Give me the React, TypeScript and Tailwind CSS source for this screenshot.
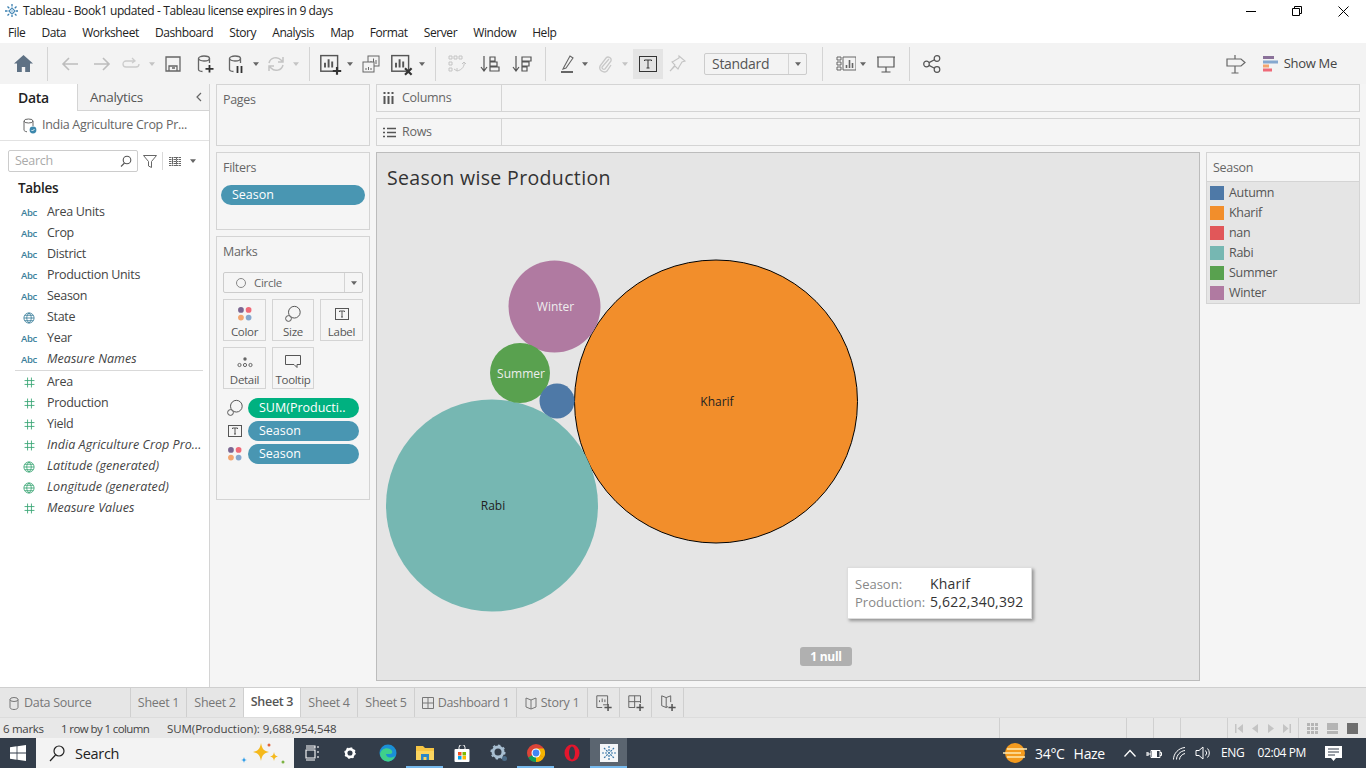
import type { ReactNode } from "react";

const ink = "#666666";

// small stroke icon wrapper, 20x20 box unless told otherwise
function Ico({ size = 20, color = ink, sw = 1.3, children }: { size?: number; color?: string; sw?: number; children: ReactNode }) {
  return (
    <svg width={size} height={size} viewBox="0 0 20 20" fill="none" stroke={color} strokeWidth={sw} className="shrink-0">
      {children}
    </svg>
  );
}

function Caret({ color = "#777777" }: { color?: string }) {
  return (
    <svg width="6" height="4" viewBox="0 0 8 5" className="shrink-0">
      <path d="M0 0h8L4 5z" fill={color} />
    </svg>
  );
}

function Cell({ w, children }: { w: string; children?: ReactNode }) {
  return <div className={`${w} h-full flex items-center justify-center shrink-0`}>{children}</div>;
}

function Sep() {
  return <div className="w-px h-[34px] bg-[#d4d4d4] shrink-0" />;
}

function Snowflake({ size = 16 }: { size?: number }) {
  return (
    <svg width={size} height={size} viewBox="0 0 16 16" fill="none" stroke="#3a7fb0" strokeWidth="1.3" className="shrink-0">
      <path d="M8 1v14M1 8h14M3.500 3.500l9 9M12.500 3.500l-9 9" strokeDasharray="2.500 1" />
      <path d="M8 5l3 3-3 3-3-3z" fill="#bcd6e8" strokeWidth="0.8" />
    </svg>
  );
}

function FourDots({ size = 20 }: { size?: number }) {
  return (
    <svg width={size} height={size} viewBox="0 0 20 20" className="shrink-0">
      <circle cx="5.500" cy="5.500" r="3.200" fill="#7b6591" />
      <circle cx="14" cy="5.500" r="3.200" fill="#ef6a78" />
      <circle cx="5.500" cy="14" r="3.200" fill="#f3a56f" />
      <circle cx="14" cy="14" r="3.200" fill="#86a8cf" />
    </svg>
  );
}

function SizeIcon() {
  return (
    <Ico size={18} color="#555555" sw={1.1}>
      <circle cx="11.500" cy="8" r="6.500" fill="#f5f5f5" />
      <circle cx="5" cy="15" r="3.200" fill="#f5f5f5" />
    </Ico>
  );
}

function TBox({ size = 14 }: { size?: number }) {
  return (
    <svg width={size} height={size} viewBox="0 0 14 14" fill="none" stroke="#555555" className="shrink-0">
      <rect x="0.500" y="1.500" width="13" height="11" />
      <path d="M4.500 5V4h5v1M7 4v6M6 10h2" />
    </svg>
  );
}

function BarChartPlus({ badge }: { badge: "plus" | "x" }) {
  return (
    <Ico size={24} color="#555555" sw={1.2}>
      <rect x="1.500" y="3" width="14" height="13" />
      <path d="M5 13V9M8 13V6M11 13V8" strokeWidth="1.600" />
      {badge === "plus" ? (
        <path d="M15 12.500v6.500M11.500 15.800h7" stroke="#333333" strokeWidth="1.800" />
      ) : (
        <path d="M12.500 13.500l5.500 5.500M18 13.500l-5.500 5.500" stroke="#333333" strokeWidth="1.800" />
      )}
    </Ico>
  );
}

function Toolbar() {
  return (
    <div className="h-[41px] bg-[#f3f3f3] flex items-center shrink-0">
      <Cell w="w-[47px]">
        <svg width="19" height="17" viewBox="0 0 19 17" fill="#5e7184">
          <path d="M9.500 0L0 8.500h3V17h4.800v-5h3.400v5H16V8.500h3z" />
        </svg>
      </Cell>
      <Sep />
      <Cell w="w-[44px]">
        <Ico color="#bdbdbd" sw={1.600}><path d="M18 10H3M9 4l-6 6 6 6" /></Ico>
      </Cell>
      <Cell w="w-[20px]">
        <Ico color="#bdbdbd" sw={1.600}><path d="M2 10h15M11 4l6 6-6 6" /></Ico>
      </Cell>
      <Cell w="w-[38px]">
        <Ico color="#cccccc"><path d="M13 7H5a3 3 0 000 6h10a3 3 0 003-3M11 4l3 3-3 2" /></Ico>
      </Cell>
      <Cell w="w-[4px]"><Caret color="#c4c4c4" /></Cell>
      <Cell w="w-[38px]">
        <Ico color="#666666"><path d="M3 3h14v14H3zM6 17v-5h8v5M9 14h3" /></Ico>
      </Cell>
      <Cell w="w-[26px]">
        <Ico color="#666666">
          <ellipse cx="9" cy="4.500" rx="5.500" ry="2.500" />
          <path d="M3.500 4.500v11c0 1 1.500 1.800 4 2M14.500 4.500V9" />
          <path d="M14.500 11v7.500M10.500 14.800h8" stroke="#333333" strokeWidth="1.800" />
        </Ico>
      </Cell>
      <Cell w="w-[36px]">
        <Ico color="#666666">
          <ellipse cx="9" cy="4.500" rx="5.500" ry="2.500" />
          <path d="M3.500 4.500v11c0 1 1.500 1.800 4 2M14.500 4.500V9" />
          <path d="M11.500 12v7M15.500 12v7" stroke="#333333" strokeWidth="1.800" />
        </Ico>
      </Cell>
      <Cell w="w-[4px]"><Caret color="#666666" /></Cell>
      <Cell w="w-[36px]">
        <Ico color="#c4c4c4" sw={1.500}><path d="M3 9a7 7 0 0112-3l2 2M17 11a7 7 0 01-12 3l-2-2M17 3v5h-5M3 17v-5h5" /></Ico>
      </Cell>
      <Cell w="w-[4px]"><Caret color="#c4c4c4" /></Cell>
      <div className="w-[11px] shrink-0" />
      <Sep />
      <Cell w="w-[42px]"><BarChartPlus badge="plus" /></Cell>
      <Cell w="w-[0px] -translate-x-[2px]"><Caret color="#666666" /></Cell>
      <Cell w="w-[38px]">
        <Ico color="#666666" sw={1}>
          <rect x="7" y="2" width="11" height="10" fill="#f3f3f3" />
          <path d="M10 10V7M12.500 10V4.500M15 10V6" />
          <rect x="2" y="8" width="11" height="10" fill="#f3f3f3" />
          <path d="M5 16v-2M7.500 16v-3M10 16v-2" />
        </Ico>
      </Cell>
      <Cell w="w-[24px]"><BarChartPlus badge="x" /></Cell>
      <Cell w="w-[16px]"><Caret color="#666666" /></Cell>
      <div className="w-[5px] shrink-0" />
      <Sep />
      <Cell w="w-[42px]">
        <Ico color="#c4c4c4" sw={1}>
          <path d="M2 2h3v3H2zM7 2h3v3H7zM12 2h3v3h-3zM2 8h3v3H2zM2 14h3v3H2z" />
          <path d="M17 8c1 4-2 8-7 9M7 15l3 2 0-3M15 10l2-2 2 2" />
        </Ico>
      </Cell>
      <Cell w="w-[24px]">
        <Ico color="#555555" sw={1.200}>
          <path d="M4 2v14M1 13l3 4 3-4" />
          <path d="M10 3h5v4h-5zM10 8h7v4h-7zM10 13h9v4h-9z" />
        </Ico>
      </Cell>
      <Cell w="w-[40px]">
        <Ico color="#555555" sw={1.200}>
          <path d="M4 2v14M1 13l3 4 3-4" />
          <path d="M10 3h9v4h-9zM10 8h7v4h-7zM10 13h5v4h-5z" />
        </Ico>
      </Cell>
      <div className="w-[3px] shrink-0" />
      <Sep />
      <Cell w="w-[44px]">
        <Ico color="#666666" sw={1.100}>
          <path d="M6 13L12 2l3 2-7 10-3 1z" />
          <path d="M3 18h12" strokeWidth="2" />
        </Ico>
      </Cell>
      <Cell w="w-[0px] -translate-x-[5px]"><Caret color="#666666" /></Cell>
      <Cell w="w-[30px]">
        <Ico color="#c8c8c8" sw={1.300}><path d="M14 5l-7 8a2 2 0 003 2l6-8a3 3 0 00-5-3l-6 8a4.500 4.500 0 007 5l4-6" /></Ico>
      </Cell>
      <Cell w="w-[10px]"><Caret color="#c4c4c4" /></Cell>
      <div className="w-[3px] shrink-0" />
      <div className="w-[30px] h-[30px] bg-[#e4e4e4] flex items-center justify-center shrink-0">
        <svg width="18" height="16" viewBox="0 0 18 16" fill="none" stroke="#333333">
          <rect x="0.500" y="0.500" width="17" height="15" />
          <path d="M5.500 5V4h7v1M9 4v8M7.500 12h3" />
        </svg>
      </div>
      <Cell w="w-[28px]">
        <Ico color="#c4c4c4" sw={1.100}><path d="M12 2l6 5-3 1-3 5-1 2-3-3-5 5 5-6-3-3 2-1 5-3z" /></Ico>
      </Cell>
      <div className="w-[13px] shrink-0" />
      <div className="w-[103px] h-[22px] border border-[#cccccc] rounded-[2px] flex items-center shrink-0">
        <span className="flex-1 pl-[7px] text-[14px] text-[#555555]">Standard</span>
        <div className="w-[18px] h-full border-l border-[#d4d4d4] flex items-center justify-center"><Caret color="#666666" /></div>
      </div>
      <div className="w-[15px] shrink-0" />
      <Sep />
      <Cell w="w-[46px]">
        <Ico color="#666666" sw={1}>
          <path d="M1 3h4v3H1zM1 8h4v3H1zM1 13h4v3H1zM7 3h13v13H7z" />
          <path d="M10.500 14v-3M13.500 14V6M16.500 14V9" strokeWidth="1.600" />
        </Ico>
      </Cell>
      <Cell w="w-[0px] -translate-x-[6px]"><Caret color="#666666" /></Cell>
      <Cell w="w-[33px]">
        <Ico color="#555555" sw={1.200}><path d="M2 3h16v10H2zM1 3h18M10 13v5M5.500 18h9" /></Ico>
      </Cell>
      <div className="w-[7px] shrink-0" />
      <Sep />
      <Cell w="w-[44px]">
        <Ico color="#555555" sw={1.200}>
          <circle cx="15" cy="4.500" r="2.800" />
          <circle cx="4.500" cy="10" r="2.800" />
          <circle cx="15" cy="15.500" r="2.800" />
          <path d="M7 8.600l5.500-2.800M7 11.400l5.500 2.800" />
        </Ico>
      </Cell>
      <div className="flex-1" />
      <Cell w="w-[24px]">
        <Ico color="#666666" sw={1.200}><path d="M1 5h14l4 3.500-4 3.500H1zM9 12v7M5.500 19h7M9 1v4" /></Ico>
      </Cell>
      <div className="w-[15px] shrink-0" />
      <svg width="15" height="16" viewBox="0 0 15 16" className="shrink-0">
        <rect x="0" y="0" width="11" height="3" fill="#8a7199" />
        <rect x="0" y="4.500" width="15" height="3" fill="#86a8cf" />
        <rect x="0" y="8.500" width="6" height="3" fill="#f3a56f" />
        <rect x="0" y="12.500" width="9" height="3" fill="#ef6a78" />
      </svg>
      <span className="ml-[6px] mr-[29px] text-[13px] text-[#444444]">Show Me</span>
    </div>
  );
}

function Abc() {
  return <span className="text-[9.500px] font-semibold text-[#3c7f9b] leading-none">Abc</span>;
}

function Globe({ color = "#3c7f9b" }: { color?: string }) {
  return (
    <div className="pl-[2px]">
      <Ico size={12} color={color} sw={1.400}>
        <circle cx="10" cy="10" r="8.500" />
        <path d="M1.500 10h17M3 5.500h14M3 14.500h14M10 1.500c-5 5-5 12 0 17M10 1.500c5 5 5 12 0 17" />
      </Ico>
    </div>
  );
}

function Hash() {
  return (
    <div className="pl-[3px]">
      <Ico size={11} color="#3aa675" sw={1.600}>
        <path d="M6.500 1v18M13.500 1v18M1 6.500h18M1 13.500h18" />
      </Ico>
    </div>
  );
}

function FieldRow({ icon, name, italic }: { icon: ReactNode; name: string; italic?: boolean }) {
  return (
    <div className="h-[21px] flex items-center">
      <div className="w-[47px] pl-[21px] flex justify-start shrink-0">{icon}</div>
      <span className={`text-[12.500px] text-[#444444] whitespace-nowrap ${italic ? "italic tracking-[0.05px]" : ""}`}>{name}</span>
    </div>
  );
}

function DataPane() {
  return (
    <div className="w-[210px] h-full bg-white border-r border-[#d4d4d4] flex flex-col shrink-0">
      <div className="h-[27px] flex shrink-0">
        <div className="w-[77px] flex items-center pl-[18px] text-[14px] font-semibold text-[#222222]">Data</div>
        <div className="flex-1 bg-[#f3f3f3] border-l border-b border-[#d4d4d4] flex items-center justify-between pl-[12px] pr-[6px]">
          <span className="text-[13.500px] text-[#555555]">Analytics</span>
          <svg width="8" height="10" viewBox="0 0 8 10" fill="none" stroke="#666666" strokeWidth="1.200"><path d="M6 1L2 5l4 4" /></svg>
        </div>
      </div>
      <div className="h-[30px] flex items-center pl-[22px] border-b border-[#e2e2e2] shrink-0">
        <svg width="15" height="16" viewBox="0 0 15 16" fill="none" stroke="#666666">
          <ellipse cx="6.500" cy="3" rx="4.500" ry="2" />
          <path d="M2 3v9c0 .8 1 1.500 3 1.800M11 3v5" />
          <circle cx="11" cy="12" r="3.400" fill="#3c88ad" stroke="none" />
          <path d="M9.500 12l1 1 2-2" stroke="#ffffff" strokeWidth="0.900" />
        </svg>
        <span className="ml-[5px] text-[12.500px] text-[#666666] whitespace-nowrap">India Agriculture Crop Pr...</span>
      </div>
      <div className="mt-[9px] h-[22px] flex items-center pl-[8px] shrink-0">
        <div className="w-[130px] h-[22px] border border-[#cccccc] rounded-[2px] flex items-center justify-between pl-[6px] pr-[5px]">
          <span className="text-[12.500px] text-[#aaaaaa]">Search</span>
          <svg width="12" height="12" viewBox="0 0 12 12" fill="none" stroke="#555555" strokeWidth="1.100"><circle cx="7" cy="5" r="3.800" /><path d="M4.500 8L1 11.500" /></svg>
        </div>
        <svg width="14" height="13" viewBox="0 0 14 13" fill="none" stroke="#666666" className="ml-[5px]"><path d="M.5.5h13L8.500 6.500V12.500L5.500 11V6.500z" /></svg>
        <div className="ml-[5px] w-px h-[18px] bg-[#d9d9d9]" />
        <svg width="12" height="9" viewBox="0 0 12 9" className="ml-[6px]" stroke="#666666" fill="none"><path d="M0 .5h12M0 2.500h12M0 4.500h12M0 6.500h12M0 8.500h12M3.500 0v9M7.500 0v9" strokeDasharray="2 .5" /></svg>
        <div className="ml-[9px]"><Caret color="#666666" /></div>
      </div>
      <div className="mt-[8px] pl-[18px] h-[17px] flex items-center text-[13.500px] font-semibold text-[#222222]">Tables</div>
      <div className="mt-[5px]">
        <FieldRow icon={<Abc />} name="Area Units" />
        <FieldRow icon={<Abc />} name="Crop" />
        <FieldRow icon={<Abc />} name="District" />
        <FieldRow icon={<Abc />} name="Production Units" />
        <FieldRow icon={<Abc />} name="Season" />
        <FieldRow icon={<Globe />} name="State" />
        <FieldRow icon={<Abc />} name="Year" />
        <FieldRow icon={<Abc />} name="Measure Names" italic />
      </div>
      <div className="ml-[15px] mr-[6px] mb-[1px] h-px bg-[#d9d9d9]" />
      <div>
        <FieldRow icon={<Hash />} name="Area" />
        <FieldRow icon={<Hash />} name="Production" />
        <FieldRow icon={<Hash />} name="Yield" />
        <FieldRow icon={<Hash />} name="India Agriculture Crop Pro..." italic />
        <FieldRow icon={<Globe color="#3aa675" />} name="Latitude (generated)" italic />
        <FieldRow icon={<Globe color="#3aa675" />} name="Longitude (generated)" italic />
        <FieldRow icon={<Hash />} name="Measure Values" italic />
      </div>
    </div>
  );
}

function MarkBtn({ icon, label }: { icon: ReactNode; label: string }) {
  return (
    <div className="h-[42px] border border-[#d4d4d4] flex flex-col items-center justify-start pt-[4px] bg-[#f5f5f5]">
      <div className="h-[20px] flex items-center justify-center">{icon}</div>
      <span className="text-[11.500px] text-[#555555] leading-[16px]">{label}</span>
    </div>
  );
}

function Pill({ color, text }: { color: string; text: string }) {
  return (
    <div className={`h-[20px] rounded-full ${color} text-white text-[12.500px] tracking-normal flex items-center pl-[11px] leading-none whitespace-nowrap`}>{text}</div>
  );
}

function CardsColumn() {
  return (
    <div className="w-[154px] ml-[6px] flex flex-col gap-[6px] shrink-0 h-full">
      <div className="h-[62px] border border-[#d4d4d4] pl-[6px] pt-[6px] text-[12.500px] text-[#666666]">Pages</div>
      <div className="h-[78px] border border-[#d4d4d4] px-[4px] pt-[7px]">
        <div className="pl-[2px] text-[12.500px] text-[#666666] leading-[16px]">Filters</div>
        <div className="mt-[9px]"><Pill color="bg-[#4996b2]" text="Season" /></div>
      </div>
      <div className="h-[264px] border border-[#d4d4d4] px-[6px] pt-[7px]">
        <div className="text-[12.500px] text-[#666666] leading-[16px]">Marks</div>
        <div className="mt-[12px] h-[21px] border border-[#cccccc] rounded-[2px] flex items-center bg-[#f5f5f5]">
          <div className="flex-1 flex items-center pl-[12px]">
            <span className="w-[10px] h-[10px] rounded-full border border-[#888888]" />
            <span className="ml-[8px] text-[11.500px] text-[#666666]">Circle</span>
          </div>
          <div className="w-[18px] h-full border-l border-[#d4d4d4] flex items-center justify-center"><Caret color="#666666" /></div>
        </div>
        <div className="mt-[6px] grid grid-cols-[43px_42px_43px] gap-x-[6px] gap-y-[6px]">
          <MarkBtn icon={<FourDots size={18} />} label="Color" />
          <MarkBtn icon={<SizeIcon />} label="Size" />
          <MarkBtn icon={<TBox />} label="Label" />
          <MarkBtn
            icon={
              <svg width="16" height="12" viewBox="0 0 16 12" fill="none" stroke="#666666">
                <circle cx="8" cy="3" r="1.700" fill="#666666" stroke="none" />
                <circle cx="2.500" cy="9" r="1.600" />
                <circle cx="8" cy="9" r="1.600" />
                <circle cx="13.500" cy="9" r="1.600" />
              </svg>
            }
            label="Detail"
          />
          <MarkBtn
            icon={
              <svg width="16" height="14" viewBox="0 0 16 14" fill="none" stroke="#555555"><path d="M.5.5h15v9H12v3l-3-3H.5z" /></svg>
            }
            label="Tooltip"
          />
        </div>
        <div className="mt-[9px] flex flex-col gap-[3px]">
          <div className="flex items-center gap-[1px]">
            <div className="w-[25px] flex justify-center shrink-0 -ml-[1px]"><SizeIcon /></div>
            <div className="w-[111px]"><Pill color="bg-[#00b180]" text="SUM(Producti.." /></div>
          </div>
          <div className="flex items-center gap-[1px]">
            <div className="w-[25px] flex justify-center shrink-0 -ml-[1px]"><TBox /></div>
            <div className="w-[111px]"><Pill color="bg-[#4996b2]" text="Season" /></div>
          </div>
          <div className="flex items-center gap-[1px]">
            <div className="w-[25px] flex justify-center shrink-0 -ml-[1px]"><FourDots size={18} /></div>
            <div className="w-[111px]"><Pill color="bg-[#4996b2]" text="Season" /></div>
          </div>
        </div>
      </div>
    </div>
  );
}

function Shelf({ icon, label }: { icon: ReactNode; label: string }) {
  return (
    <div className="h-[28px] border border-[#d4d4d4] flex shrink-0">
      <div className="w-[125px] border-r border-[#d4d4d4] flex items-center pl-[6px]">
        <div className="w-[19px] flex items-center">{icon}</div>
        <span className="text-[12.500px] text-[#666666]">{label}</span>
      </div>
    </div>
  );
}

const circles = [
  { name: "Kharif", cx: 339, cy: 248.500, r: 141.500, fill: "#f28e2b", text: "#222222", stroke: "#000000" },
  { name: "Rabi", cx: 115, cy: 352.500, r: 106, fill: "#76b7b2", text: "#222222" },
  { name: "Winter", cx: 177.500, cy: 153.500, r: 46, fill: "#b07aa1", text: "#eeeeee" },
  { name: "Summer", cx: 143, cy: 220, r: 30, fill: "#59a14f", text: "#eeeeee" },
  { name: "", cx: 180, cy: 248, r: 17.500, fill: "#4e79a7", text: "#ffffff" },
];

const legend = [
  { name: "Autumn", color: "#4e79a7" },
  { name: "Kharif", color: "#f28e2b" },
  { name: "nan", color: "#e15759" },
  { name: "Rabi", color: "#76b7b2" },
  { name: "Summer", color: "#59a14f" },
  { name: "Winter", color: "#b07aa1" },
];

function Viz() {
  return (
    <div className="relative w-[824px] h-[529px] border border-[#bcbcbc] bg-[#e5e5e5] shrink-0">
      <div className="absolute left-[10px] top-[10px] text-[19.500px] font-medium tracking-[0.35px] text-[#333333] whitespace-nowrap">Season wise Production</div>
      <svg width="822" height="527" className="absolute left-0 top-0">
        {circles.map((c) => (
          <g key={c.fill}>
            <circle cx={c.cx} cy={c.cy} r={c.r} fill={c.fill} stroke={c.stroke ?? "none"} />
            <text x={c.cx + 1} y={c.cy + 4.500} fontSize="12" textAnchor="middle" fill={c.text} letterSpacing="0">{c.name}</text>
          </g>
        ))}
      </svg>
      <div className="absolute left-[470px] top-[414px] w-[185px] h-[52px] bg-white shadow-[2px_2px_3px_rgba(0,0,0,0.35)] border border-[#dddddd] pl-[7px] pt-[7px] text-[13px] leading-[18px] tracking-normal">
        <div className="flex items-baseline"><span className="w-[75px] text-[#888888]">Season:</span><span className="text-[14px] tracking-[0.2px] text-[#333333]">Kharif</span></div>
        <div className="flex items-baseline"><span className="w-[75px] text-[#888888]">Production:</span><span className="text-[14px] tracking-[0.2px] text-[#333333]">5,622,340,392</span></div>
      </div>
      <div className="absolute left-[423px] top-[494px] w-[52px] h-[19px] rounded-[3px] bg-[#b0b0b0] text-white text-[12px] font-bold flex items-center justify-center">1 null</div>
    </div>
  );
}

function Legend() {
  return (
    <div className="w-[154px] h-[152px] border border-[#d4d4d4] shrink-0">
      <div className="h-[29px] border-b border-[#d4d4d4] flex items-center pl-[6px] pt-[2px] text-[12.500px] text-[#666666]">Season</div>
      <div className="h-[121px] bg-[#e5e5e5] pt-[1px]">
        {legend.map((l) => (
          <div key={l.name} className="h-[20px] flex items-center pl-[3px]">
            <span className="w-[14px] h-[14px]" style={{ backgroundColor: l.color }} />
            <span className="ml-[5px] text-[12.500px] text-[#555555]">{l.name}</span>
          </div>
        ))}
      </div>
    </div>
  );
}

function SheetTab({ w, label, active, icon }: { w: string; label: string; active?: boolean; icon?: ReactNode }) {
  return (
    <div className={`${w} h-full shrink-0 border-r border-[#cfcfcf] flex items-center justify-center gap-[4px] text-[12.500px] ${active ? "bg-white font-semibold text-[#555555]" : "pt-[1px] text-[#777777]"}`}>
      {icon}
      <span className="whitespace-nowrap">{label}</span>
    </div>
  );
}

function TabIcon({ children }: { children: ReactNode }) {
  return (
    <Ico size={18} color="#666666" sw={1.100}>
      {children}
      <path d="M14.500 11v8M10.500 15h8" stroke="#555555" strokeWidth="1.700" />
    </Ico>
  );
}

function SheetTabs() {
  return (
    <div className="h-[30px] bg-[#e6e6e6] border-t border-[#cfcfcf] flex shrink-0">
      <div className="w-[131px] h-full shrink-0 border-r border-[#cfcfcf] flex items-center pl-[9px] pt-[1px] gap-[5px] text-[12.500px] text-[#777777]">
        <svg width="10" height="13" viewBox="0 0 10 13" fill="none" stroke="#777777"><ellipse cx="5" cy="2.500" rx="4" ry="2" /><path d="M1 2.500v8c0 1 1.800 2 4 2s4-1 4-2v-8" /></svg>
        Data Source
      </div>
      <SheetTab w="w-[56px]" label="Sheet 1" />
      <SheetTab w="w-[57px]" label="Sheet 2" />
      <SheetTab w="w-[57px]" label="Sheet 3" active />
      <SheetTab w="w-[57px]" label="Sheet 4" />
      <SheetTab w="w-[57px]" label="Sheet 5" />
      <SheetTab
        w="w-[102px]"
        label="Dashboard 1"
        icon={<svg width="12" height="12" viewBox="0 0 12 12" fill="none" stroke="#777777"><path d="M.5.5h11v11H.5zM6 .5v11M.5 6h11" /></svg>}
      />
      <SheetTab
        w="w-[71px]"
        label="Story 1"
        icon={<svg width="12" height="13" viewBox="0 0 12 13" fill="none" stroke="#777777"><path d="M6 3L1 1v9l5 2 5-2V1zM6 3v9" /></svg>}
      />
      <div className="w-[32px] h-full border-r border-[#cfcfcf] flex items-center justify-center">
        <TabIcon><path d="M2 2h12v10H9M2 2v13h6M5 9V7M8 9V5M11 9V6" /></TabIcon>
      </div>
      <div className="w-[32px] h-full border-r border-[#cfcfcf] flex items-center justify-center">
        <TabIcon><path d="M2 2h13v8M2 2v13h7M8.500 2v13M2 8.500h13" /></TabIcon>
      </div>
      <div className="w-[32px] h-full border-r border-[#cfcfcf] flex items-center justify-center">
        <TabIcon><path d="M8 4L3 2v11l5 2 2-1M8 4l5-2v7M8 4v11" /></TabIcon>
      </div>
    </div>
  );
}

function StatusBar() {
  return (
    <div className="h-[21px] bg-[#e8e8e8] border-t border-[#dcdcdc] flex items-center text-[11.500px] text-[#444444] shrink-0">
      <span className="ml-[3px] w-[58px] pt-[1px]">6 marks</span>
      <span className="w-[106px] pt-[1px] tracking-[-0.6px] whitespace-nowrap">1 row by 1 column</span>
      <span className="pt-[1px] tracking-[-0.07px] whitespace-nowrap">SUM(Production): 9,688,954,548</span>
      <div className="flex-1" />
      <div className="h-full flex">
        <div className="w-[127px] border-l border-[#d0d0d0]" />
        <div className="w-[27px] border-l border-[#d0d0d0]" />
        <div className="w-[27px] border-l border-[#d0d0d0]" />
        <div className="w-[47px] border-l border-[#d0d0d0]" />
        <div className="w-[71px] border-l border-[#d0d0d0] flex items-center justify-around px-[2px]">
          <svg width="8" height="9" viewBox="0 0 8 9" fill="#c4c4c4"><path d="M0 0h1.500v9H0zM8 0v9L2.500 4.500z" /></svg>
          <svg width="6" height="9" viewBox="0 0 6 9" fill="#c4c4c4"><path d="M6 0v9L0 4.500z" /></svg>
          <svg width="6" height="9" viewBox="0 0 6 9" fill="#c4c4c4"><path d="M0 0v9l6-4.500z" /></svg>
          <svg width="8" height="9" viewBox="0 0 8 9" fill="#c4c4c4"><path d="M0 0v9l5.500-4.500zM6.500 0H8v9H6.500z" /></svg>
        </div>
        <div className="w-[68px] border-l border-[#d0d0d0] flex items-center pl-[8px] gap-[9px]">
          <div className="grid grid-cols-3 gap-[1px]">
            {[0, 1, 2, 3, 4, 5, 6, 7, 8].map((i) => (
              <span key={i} className="w-[3px] h-[3px] bg-[#b5b5b5]" />
            ))}
          </div>
          <div className="w-[11px] h-[11px] flex flex-col gap-[1px]">
            <span className="h-[7px] bg-[#b5b5b5]" />
            <span className="h-[3px] bg-[#b5b5b5]" />
          </div>
          <span className="w-[11px] h-[11px] bg-[#6e6e6e]" />
        </div>
      </div>
    </div>
  );
}

function TaskSlot({ w = "w-[37px]", active, underline, children }: { w?: string; active?: boolean; underline?: boolean; children: ReactNode }) {
  return (
    <div className={`${w} h-full flex items-center justify-center shrink-0 relative ${active ? "bg-[#5b6570]" : ""}`}>
      {children}
      {underline && <span className="absolute left-0 right-0 bottom-0 h-[2px] bg-[#76b9ed]" />}
    </div>
  );
}

function Taskbar() {
  return (
    <div className="h-[30px] bg-[#333d4a] flex items-center text-white shrink-0">
      <div className="w-[36px] h-full flex items-center justify-center shrink-0">
        <svg width="16" height="16" viewBox="0 0 16 16" fill="#ffffff"><path d="M0 2.200L6.600 1.300V7.500H0zM7.400 1.200L16 0V7.500H7.400zM0 8.500H6.600V14.700L0 13.800zM7.400 8.500H16V16L7.400 14.800z" /></svg>
      </div>
      <div className="w-[258px] h-full bg-[#f3f3f3] flex items-center pl-[13px] relative shrink-0">
        <svg width="16" height="17" viewBox="0 0 16 17" fill="none" stroke="#222222" strokeWidth="1.200"><circle cx="10" cy="6" r="5" /><path d="M6.500 10L1 16" /></svg>
        <span className="ml-[10px] mt-[1px] text-[14.500px] text-[#222222]">Search</span>
        <svg width="46" height="24" viewBox="0 0 46 24" className="absolute left-[203px] top-[3px]">
          <path d="M22 2c1 6 3 8 8 9-5 1-7 3-8 9-1-6-3-8-8-9 5-1 7-3 8-9z" fill="#f5b91c" />
          <path d="M35 11c.5 3 1.500 4 4 4.500-2.500.5-3.500 1.500-4 4.500-.5-3-1.500-4-4-4.500 2.500-.5 3.500-1.500 4-4.500z" fill="#f5b91c" />
          <path d="M5 16c.3 2 1 2.700 3 3-2 .3-2.700 1-3 3-.3-2-1-2.700-3-3 2-.3 2.700-1 3-3z" fill="#2b9be8" />
          <circle cx="30" cy="4" r="1.500" fill="#e0653b" />
          <circle cx="44" cy="21" r="1.500" fill="#7cb342" />
        </svg>
      </div>
      <TaskSlot w="w-[36px]">
        <svg width="16" height="16" viewBox="0 0 16 16" fill="none" stroke="#ffffff" strokeWidth="1.100"><path d="M2 3h9V1H2M2 5h9v8H2zM2 15h9M14 1v2M14 6v2M14 11v2" /></svg>
      </TaskSlot>
      <TaskSlot w="w-[39px]">
        <svg width="12" height="12" viewBox="0 0 14 14"><circle cx="7" cy="7" r="4.500" fill="none" stroke="#ffffff" strokeWidth="3" /><circle cx="7" cy="7" r="6" fill="none" stroke="#ffffff" strokeWidth="1.500" strokeDasharray="2 2.700" /></svg>
      </TaskSlot>
      <TaskSlot>
        <svg width="18" height="18" viewBox="0 0 18 18">
          <circle cx="9" cy="9" r="8.500" fill="#1b8fd6" />
          <path d="M1 10c1-5 6-7 10-5 3 1.500 3 5 0 5H7c0 3 4 5 9 2-1 3-4 5.500-7 5.500-4 0-7.500-3-8-7.500z" fill="#3fd08a" />
        </svg>
      </TaskSlot>
      <TaskSlot underline>
        <svg width="18" height="16" viewBox="0 0 18 16">
          <path d="M0 1h7l2 2h9v12H0z" fill="#f6c544" />
          <path d="M0 6h18v9H0z" fill="#fbd55f" />
          <path d="M5 9h8v6h-2.500v-3h-3v3H5z" fill="#2a87c8" />
        </svg>
      </TaskSlot>
      <TaskSlot>
        <svg width="16" height="17" viewBox="0 0 16 17">
          <path d="M5 4V2.500a3 3 0 016 0V4" fill="none" stroke="#ffffff" />
          <rect x="0.500" y="4" width="15" height="13" rx="1" fill="#ffffff" />
          <rect x="4" y="7" width="3.500" height="3.500" fill="#f25022" />
          <rect x="8.500" y="7" width="3.500" height="3.500" fill="#7fba00" />
          <rect x="4" y="11" width="3.500" height="3.500" fill="#00a4ef" />
          <rect x="8.500" y="11" width="3.500" height="3.500" fill="#ffb900" />
        </svg>
      </TaskSlot>
      <TaskSlot>
        <svg width="18" height="18" viewBox="0 0 18 18">
          <circle cx="8" cy="8" r="5" fill="none" stroke="#a8bfd2" strokeWidth="3" />
          <circle cx="8" cy="8" r="6.800" fill="none" stroke="#a8bfd2" strokeWidth="1.500" strokeDasharray="2.500 2.800" />
          <circle cx="14.500" cy="14.500" r="2.500" fill="#4b6b87" />
        </svg>
      </TaskSlot>
      <TaskSlot underline>
        <svg width="18" height="18" viewBox="0 0 18 18">
          <circle cx="9" cy="9" r="9" fill="#db4437" />
          <path d="M9 9L1.200 13.500A9 9 0 009 18z" fill="#0f9d58" />
          <path d="M9 9l7.800 4.500A9 9 0 019 18z" fill="#f4b400" />
          <path d="M9 9l7.800 4.500A9 9 0 0016.800 4.500H9z" fill="#f4b400" />
          <circle cx="9" cy="9" r="4.500" fill="#ffffff" />
          <circle cx="9" cy="9" r="3.400" fill="#4285f4" />
        </svg>
      </TaskSlot>
      <TaskSlot w="w-[36px]">
        <svg width="16" height="18" viewBox="0 0 16 18">
          <ellipse cx="8" cy="9" rx="7.500" ry="8.500" fill="#e3162d" />
          <ellipse cx="8" cy="9" rx="3" ry="6.500" fill="#333d4a" />
        </svg>
      </TaskSlot>
      <TaskSlot active underline>
        <svg width="18" height="18" viewBox="0 0 18 18">
          <rect width="18" height="18" fill="#f4f6f8" />
          <path d="M9 2v14M2 9h14M4 4l10 10M14 4L4 14" stroke="#3a78a8" strokeWidth="1.200" strokeDasharray="2 1" />
        </svg>
      </TaskSlot>
      <div className="flex-1" />
      <svg width="24" height="22" viewBox="0 0 24 22" className="shrink-0">
        <circle cx="12" cy="11" r="10" fill="#f39a1e" />
        <path d="M4 7h20M0 11h18M4 15h18" stroke="#ffe9b0" strokeWidth="1.600" />
      </svg>
      <span className="ml-[8px] text-[14px] whitespace-nowrap">34°C</span>
      <span className="ml-[9px] text-[14px] whitespace-nowrap">Haze</span>
      <svg width="12" height="8" viewBox="0 0 12 8" fill="none" stroke="#ffffff" strokeWidth="1.300" className="ml-[19px] shrink-0"><path d="M.5 7.500L6 1.500l5.500 6" /></svg>
      <svg width="16" height="12" viewBox="0 0 16 12" fill="none" stroke="#ffffff" className="ml-[10px] shrink-0">
        <path d="M5 3.500h9v7H5zM14 5.500h1.500v3H14M5 7H2M2 5v4M0 6h2M0 8h2" />
        <path d="M6 4h5v6H6z" fill="#ffffff" stroke="none" />
      </svg>
      <svg width="13" height="13" viewBox="0 0 13 13" fill="none" stroke="#ffffff" className="ml-[11px] shrink-0">
        <path d="M.5 12.500c0-6 5-11.500 11.500-12M3.500 12.500c0-4 3.500-8.500 8.500-9M6.500 12.500c0-2.500 2.500-5.500 5.500-6" />
      </svg>
      <svg width="16" height="14" viewBox="0 0 16 14" fill="none" stroke="#ffffff" className="ml-[9px] shrink-0">
        <path d="M1 4.500h3L8 1v12L4 9.500H1zM10.500 4.500a3.500 3.500 0 010 5M12.500 2.500a6.500 6.500 0 010 9" />
      </svg>
      <span className="ml-[10px] text-[12px] whitespace-nowrap">ENG</span>
      <span className="ml-[13px] text-[12px] tracking-[-0.4px] whitespace-nowrap">02:04 PM</span>
      <svg width="17" height="17" viewBox="0 0 17 17" fill="#ffffff" className="ml-[19px] shrink-0">
        <path d="M0 1h17v12h-6l-2.500 3L6 13H0z" />
        <path d="M3 4h11M3 7h11M3 10h7" stroke="#333d4a" />
      </svg>
      <div className="w-[24px] shrink-0" />
    </div>
  );
}

export default function App() {
  return (
    <div className="w-[1366px] h-[768px] overflow-hidden flex flex-col bg-white text-[#333333] [font-family:'Open_Sans',sans-serif] tracking-[-0.3px]">
      <div className="h-[22px] flex items-center justify-between shrink-0">
        <div className="flex items-center pl-[4px]">
          <Snowflake size={16} />
          <span className="ml-[3px] text-[12px] tracking-[-0.38px] text-[#222222] whitespace-nowrap">Tableau - Book1 updated - Tableau license expires in 9 days</span>
        </div>
        <div className="flex items-center">
          <div className="w-[46px] flex justify-center"><span className="w-[10px] h-px bg-black" /></div>
          <div className="w-[46px] flex justify-center">
            <svg width="10" height="10" viewBox="0 0 10 10" fill="none" stroke="#000000"><path d="M.5 2.500h7v7h-7zM2.500 2.500v-2h7v7h-2" /></svg>
          </div>
          <div className="w-[46px] flex justify-center">
            <svg width="11" height="11" viewBox="0 0 11 11" stroke="#000000"><path d="M.5.5l10 10M10.500.5l-10 10" /></svg>
          </div>
        </div>
      </div>
      <div className="h-[21px] flex items-center pl-[8px] gap-[16px] text-[12px] tracking-[-0.4px] text-[#222222] shrink-0">
        {["File", "Data", "Worksheet", "Dashboard", "Story", "Analysis", "Map", "Format", "Server", "Window", "Help"].map((m) => (
          <span key={m}>{m}</span>
        ))}
      </div>
      <Toolbar />
      <div className="flex-1 min-h-0 flex bg-[#f5f5f5]">
        <DataPane />
        <CardsColumn />
        <div className="ml-[6px] flex flex-col gap-[6px]">
          <Shelf
            icon={<svg width="11" height="12" viewBox="0 0 11 12" stroke="#555555" strokeWidth="2"><path d="M1.500 4v8M5.500 4v8M9.500 4v8M1.500 0v2M5.500 0v2M9.500 0v2" /></svg>}
            label="Columns"
          />
          <Shelf
            icon={<svg width="13" height="11" viewBox="0 0 13 11" stroke="#555555" strokeWidth="1.600"><path d="M0 1.500h2M4 1.500h9M0 5.500h2M4 5.500h9M0 9.500h2M4 9.500h9" /></svg>}
            label="Rows"
          />
          <div className="flex gap-[6px]">
            <Viz />
            <Legend />
          </div>
        </div>
      </div>
      <SheetTabs />
      <StatusBar />
      <Taskbar />
    </div>
  );
}
